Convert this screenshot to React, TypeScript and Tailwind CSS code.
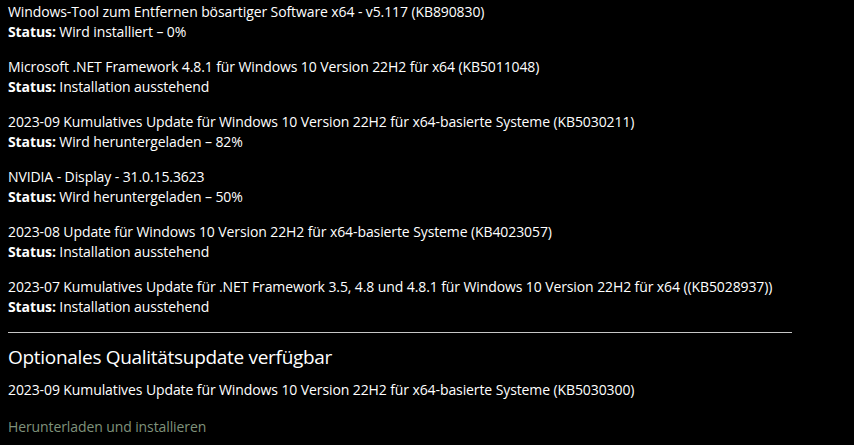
import React from 'react';

interface UpdateItem {
    title: string;
    status: string;
}

const updates: UpdateItem[] = [
    { title: 'Windows-Tool zum Entfernen bösartiger Software x64 - v5.117 (KB890830)', status: 'Wird installiert – 0%' },
    { title: 'Microsoft .NET Framework 4.8.1 für Windows 10 Version 22H2 für x64 (KB5011048)', status: 'Installation ausstehend' },
    { title: '2023-09 Kumulatives Update für Windows 10 Version 22H2 für x64-basierte Systeme (KB5030211)', status: 'Wird heruntergeladen – 82%' },
    { title: 'NVIDIA - Display - 31.0.15.3623', status: 'Wird heruntergeladen – 50%' },
    { title: '2023-08 Update für Windows 10 Version 22H2 für x64-basierte Systeme (KB4023057)', status: 'Installation ausstehend' },
    { title: '2023-07 Kumulatives Update für .NET Framework 3.5, 4.8 und 4.8.1 für Windows 10 Version 22H2 für x64 ((KB5028937))', status: 'Installation ausstehend' },
];

export default function App() {
    return (
        <div className="min-h-screen bg-black text-white px-2 pt-[2px] font-['Open_Sans',sans-serif] text-[14px] leading-[20px] tracking-[-0.1px]">
            <div className="w-[784px]">
                {/* Pending updates */}
                <div className="flex flex-col gap-[15px]">
                    {updates.map((u) => (
                        <div key={u.title}>
                            <div className="whitespace-nowrap">{u.title}</div>
                            <div>
                                <span className="font-bold">Status:</span> {u.status}
                            </div>
                        </div>
                    ))}
                </div>

                <div className="mt-[15px] h-px bg-[#c6c6c6]" />

                {/* Optional update */}
                <h2 className="mt-[10px] text-[19px] leading-[28px] tracking-[-0.3px]">Optionales Qualitätsupdate verfügbar</h2>
                <div className="mt-[9px] whitespace-nowrap">
                    2023-09 Kumulatives Update für Windows 10 Version 22H2 für x64-basierte Systeme (KB5030300)
                </div>
                <button className="mt-[17px] block tracking-[-0.1px] text-[#7f927b]">Herunterladen und installieren</button>
            </div>
        </div>
    );
}
